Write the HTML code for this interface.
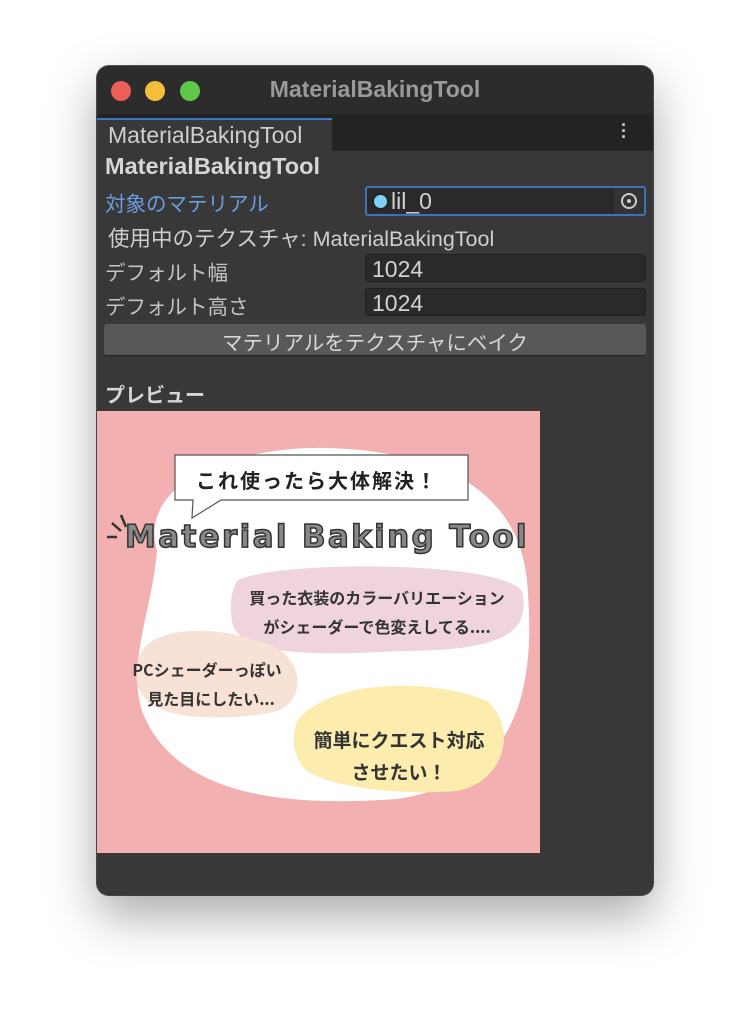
<!DOCTYPE html>
<html><head><meta charset="utf-8"><style>
body{margin:0;width:750px;height:1024px;background:#fff;position:relative;font-family:"Liberation Sans","Noto Sans CJK JP",sans-serif;overflow:hidden}
.win{position:absolute;left:97px;top:66px;width:556px;height:829px;background:#383838;border-radius:12px;overflow:hidden;box-shadow:0 20px 50px rgba(0,0,0,.35),0 0 0 1px #555}
.t{position:absolute;white-space:nowrap}
.dot{position:absolute;top:15px;width:20px;height:20px;border-radius:50%}
.field{position:absolute;left:268px;width:281px;height:28px;background:#2a2a2a;border:1px solid #212121;border-radius:3px;box-sizing:border-box;color:#d2d2d2;font-size:23px;line-height:28px;padding-left:6px}
.lbl{color:#c4c4c4;font-size:20.5px}
</style></head><body>
<div class="win">
 <div style="position:absolute;left:0;top:0;width:556px;height:48px;background:#2c2c2c"></div>
 <div class="dot" style="left:14px;background:#ec5f57"></div>
 <div class="dot" style="left:48px;background:#f4bd3a"></div>
 <div class="dot" style="left:83px;background:#5fc84b"></div>
 <div class="t" style="left:0;width:556px;text-align:center;top:10px;font-size:23px;font-weight:bold;color:#9a9a9a">MaterialBakingTool</div>
 <div style="position:absolute;left:0;top:48px;width:556px;height:37px;background:#232323"></div>
 <div style="position:absolute;left:0;top:52px;width:235px;height:33px;background:#383838;border-top:2px solid #3d7ac0;box-sizing:border-box"></div>
 <div class="t" style="left:11px;top:56px;font-size:23px;color:#cfcfcf">MaterialBakingTool</div>
 <div class="t" style="left:524px;top:56px;font-size:18px;color:#cfcfcf;font-weight:bold;line-height:6px">·<br>·<br>·</div>
 <div class="t" style="left:8px;top:87px;font-size:23.5px;font-weight:bold;color:#d6d6d6">MaterialBakingTool</div>
 <div class="t lbl" style="left:8px;top:121px;color:#6a9de0">対象のマテリアル</div>
 <div class="field" style="top:120px;height:30px;border:2px solid #3d73b8;padding-left:24px;line-height:26px;background:#2a2a2a">lil_0
  <div style="position:absolute;left:5px;top:5px;width:13px;height:13px;border-radius:50%;background:#7fd0f5;border:2px solid #222"></div>
  <div style="position:absolute;right:0;top:0;width:30px;height:26px;background:#333"></div>
  <div style="position:absolute;right:7px;top:5px;width:16px;height:16px;border-radius:50%;border:2px solid #ccc;box-sizing:border-box"><div style="position:absolute;left:4px;top:4px;width:4px;height:4px;border-radius:50%;background:#ccc"></div></div>
 </div>
 <div class="t" style="left:11px;top:156px;font-size:21.5px;color:#cfcfcf">使用中のテクスチャ: MaterialBakingTool</div>
 <div class="t lbl" style="left:8px;top:190px">デフォルト幅</div>
 <div class="field" style="top:188px">1024</div>
 <div class="t lbl" style="left:8px;top:224px">デフォルト高さ</div>
 <div class="field" style="top:222px">1024</div>
 <div style="position:absolute;left:7px;top:258px;width:542px;height:32px;background:#585858;border-radius:3px;border-bottom:1px solid #222;box-sizing:border-box"></div>
 <div class="t" style="left:7px;width:542px;text-align:center;top:260px;font-size:20.5px;color:#d8d8d8">マテリアルをテクスチャにベイク</div>
 <div class="t" style="left:8px;top:313px;font-size:20px;font-weight:bold;color:#d6d6d6">プレビュー</div>
 <svg style="position:absolute;left:0;top:345px" width="443" height="442" viewBox="0 0 443 442">
  <rect width="443" height="442" fill="#f2b0b0"/>
  <path d="M60 140 C40 70 140 35 230 37 C330 40 420 70 430 170 C440 280 420 370 300 388 C200 395 80 390 45 300 C30 250 55 200 60 140Z" fill="#fff"/>
  <path d="M140 170 C170 150 400 148 425 180 C435 225 400 240 300 240 C220 245 140 245 135 210 C132 190 135 180 140 170Z" fill="#efd4de"/>
  <path d="M45 240 C60 215 120 215 160 230 C210 240 210 290 180 300 C140 310 70 310 50 290 C35 275 38 255 45 240Z" fill="#f8e1d5"/>
  <path d="M200 310 C230 270 330 265 390 290 C420 315 410 370 360 380 C300 385 220 375 205 355 C195 340 195 325 200 310Z" fill="#fcedaf"/>
  <path d="M78 44 L371 44 L371 89 L124 89 L95 107 L96 89 L78 89Z" fill="#fff" stroke="#555" stroke-width="1.2"/>
  <text x="220" y="77" text-anchor="middle" font-size="20" font-weight="bold" fill="#222" font-family="Noto Sans CJK JP,sans-serif" letter-spacing="2">これ使ったら大体解決！</text>
  <path d="M10 126 L20 126 M15 112 L24 120 M24 104 L29 116" stroke="#333" stroke-width="2.5"/>
  <text x="28" y="136" font-size="31" font-weight="bold" fill="#888" stroke="#333" stroke-width="1.5" font-family="DejaVu Sans,sans-serif" letter-spacing="0.5" textLength="402">Material Baking Tool</text>
  <text x="280" y="193" text-anchor="middle" font-size="16" font-weight="bold" fill="#333" font-family="Noto Sans CJK JP,sans-serif">買った衣装のカラーバリエーション</text>
  <text x="280" y="222" text-anchor="middle" font-size="16" font-weight="bold" fill="#333" font-family="Noto Sans CJK JP,sans-serif">がシェーダーで色変えしてる....</text>
  <text x="110" y="265" text-anchor="middle" font-size="16" font-weight="bold" fill="#333" font-family="Noto Sans CJK JP,sans-serif">PCシェーダーっぽい</text>
  <text x="114" y="294" text-anchor="middle" font-size="16" font-weight="bold" fill="#333" font-family="Noto Sans CJK JP,sans-serif">見た目にしたい...</text>
  <text x="302" y="336" text-anchor="middle" font-size="19" font-weight="bold" fill="#333" font-family="Noto Sans CJK JP,sans-serif">簡単にクエスト対応</text>
  <text x="302" y="368" text-anchor="middle" font-size="19" font-weight="bold" fill="#333" font-family="Noto Sans CJK JP,sans-serif">させたい！</text>
 </svg>
</div>
</body></html>
